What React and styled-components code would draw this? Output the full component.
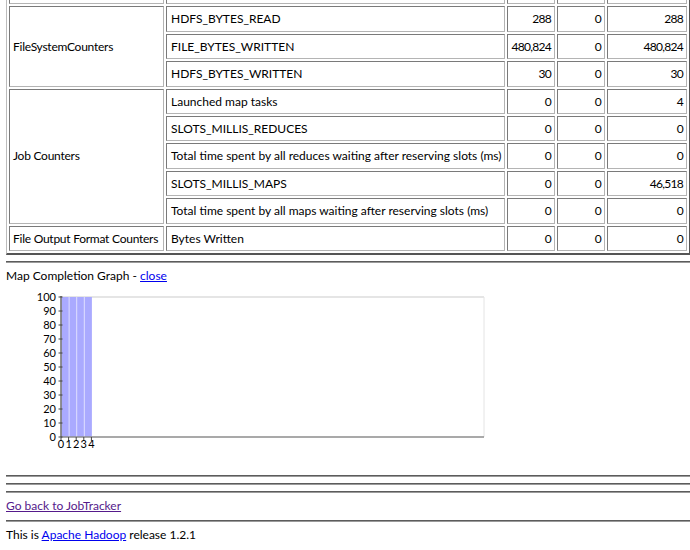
import React from 'react';
import styled, { createGlobalStyle } from 'styled-components';

const GlobalStyle = createGlobalStyle`
  body {
    margin: 0;
    padding: 0 0 0 6px;
    font-family: Lato, "Liberation Sans", sans-serif;
    font-size: 12px;
    color: #000;
    background: #fff;
    overflow: hidden;
  }
`;

const counters = [
  { group: 'File Input Format Counters', rows: [['Bytes Read', '0', '0', '0']] },
  {
    group: 'FileSystemCounters',
    rows: [
      ['HDFS_BYTES_READ', '288', '0', '288'],
      ['FILE_BYTES_WRITTEN', '480,824', '0', '480,824'],
      ['HDFS_BYTES_WRITTEN', '30', '0', '30'],
    ],
  },
  {
    group: 'Job Counters',
    rows: [
      ['Launched map tasks', '0', '0', '4'],
      ['SLOTS_MILLIS_REDUCES', '0', '0', '0'],
      ['Total time spent by all reduces waiting after reserving slots (ms)', '0', '0', '0'],
      ['SLOTS_MILLIS_MAPS', '0', '0', '46,518'],
      ['Total time spent by all maps waiting after reserving slots (ms)', '0', '0', '0'],
    ],
  },
  { group: 'File Output Format Counters', rows: [['Bytes Written', '0', '0', '0']] },
];

const CounterTable = styled.table`
  width: 100%;
  table-layout: fixed;
  border-collapse: separate;
  border-spacing: 2px;
  margin-top: -24px;
  border-style: solid;
  border-width: 1px 2px 2px 1px;
  border-color: #bcbcbc #555 #555 #bcbcbc;
`;

const Cell = styled.td`
  padding: 4px 4px 4px 3px;
  line-height: 15.4px;
  white-space: nowrap;
  overflow: hidden;
  border: 1px solid;
  border-color: #7a7a7a #b4b4b4 #b4b4b4 #7a7a7a;
  text-align: left;
  vertical-align: middle;
`;

const GroupCell = styled(Cell)`
  letter-spacing: -0.25px;
`;

const NameCell = styled(Cell)`
  padding-left: 4px;
`;

const NumCell = styled(Cell)`
  text-align: right;
  padding-right: 3px;
  letter-spacing: -0.7px;
`;

const Rule = styled.hr`
  margin: 6px 0;
  height: 0;
  border: 0;
  border-top: 1px solid #5c5c5c;
  border-bottom: 1px solid #9a9a9a;
`;

const TextLine = styled.div`
  line-height: 14.4px;
`;

const Link = styled.a`
  color: ${p => (p.$visited ? '#551a8b' : '#0000ee')};
  text-decoration: underline;
  cursor: pointer;
`;

const GraphBox = styled.svg`
  display: block;
  width: 484px;
  height: 186px;
  font-family: Lato, "Liberation Sans", sans-serif;
`;

// plot area inside the svg
const PL = 55;
const PT = 14;
const PR = 478;
const PB = 154;
const STEP = 7.6;
const tasks = [100, 100, 100, 100];

function CompletionGraph() {
  const ys = Array.from({ length: 11 }, (_, i) => i * 10);
  const yOf = v => PB - (v / 100) * (PB - PT);
  return (
    <GraphBox viewBox="0 0 484 186">
      <line x1={PL} y1={PT} x2={PR} y2={PT} stroke="#dcdcdc" strokeWidth="1.5" />
      <line x1={PR} y1={PT} x2={PR} y2={PB} stroke="#e4e4e4" strokeWidth="1" />
      {tasks.map((v, i) => (
        <rect
          key={i}
          x={PL + i * STEP + 0.5}
          y={yOf(v)}
          width={STEP}
          height={PB - yOf(v)}
          fill="#aaaaff"
        />
      ))}
      {[1, 2, 3].map(i => (
        <line key={i} x1={PL + i * STEP + 0.5} y1={PT} x2={PL + i * STEP + 0.5} y2={PB} stroke="#dcdcff" strokeWidth="1" />
      ))}
      <line x1={PL} y1={PB} x2={PR} y2={PB} stroke="#8c8c8c" strokeWidth="1.5" />
      <line x1={PL} y1={PT - 1} x2={PL} y2={PB} stroke="#6e6e6e" strokeWidth="1.5" />
      {ys.map(v => (
        <g key={v}>
          <line x1={PL - 2.5} y1={yOf(v)} x2={PL + 1.5} y2={yOf(v)} stroke="#444" strokeWidth="1" />
          <text x={PL - 5} y={yOf(v) + 4} fontSize="11" textAnchor="end" fill="#000">{v}</text>
        </g>
      ))}
      {[0, 1, 2, 3, 4].map(i => (
        <g key={i}>
          <line x1={PL + i * STEP} y1={PB} x2={PL + i * STEP} y2={PB + 4} stroke="#444" strokeWidth="1" />
          <text x={PL + i * STEP} y={PB + 11} fontSize="11" textAnchor="middle" fill="#000">{i}</text>
        </g>
      ))}
    </GraphBox>
  );
}

export default function App() {
  return (
    <>
      <GlobalStyle />
      <CounterTable>
        <colgroup>
          <col style={{ width: 155 }} />
          <col style={{ width: 339 }} />
          <col style={{ width: 48 }} />
          <col style={{ width: 48 }} />
          <col style={{ width: 80 }} />
        </colgroup>
        <tbody>
          {counters.map(c =>
            c.rows.map((r, i) => (
              <tr key={c.group + r[0]}>
                {i === 0 && <GroupCell rowSpan={c.rows.length}>{c.group}</GroupCell>}
                <NameCell>{r[0]}</NameCell>
                <NumCell>{r[1]}</NumCell>
                <NumCell>{r[2]}</NumCell>
                <NumCell>{r[3]}</NumCell>
              </tr>
            ))
          )}
        </tbody>
      </CounterTable>
      <Rule />
      <TextLine>
        Map Completion Graph - <Link>close</Link>
      </TextLine>
      <CompletionGraph />
      <Rule />
      <Rule />
      <Rule />
      <TextLine>
        <Link $visited>Go back to JobTracker</Link>
      </TextLine>
      <Rule />
      <TextLine>
        This is <Link>Apache Hadoop</Link> release 1.2.1
      </TextLine>
    </>
  );
}
